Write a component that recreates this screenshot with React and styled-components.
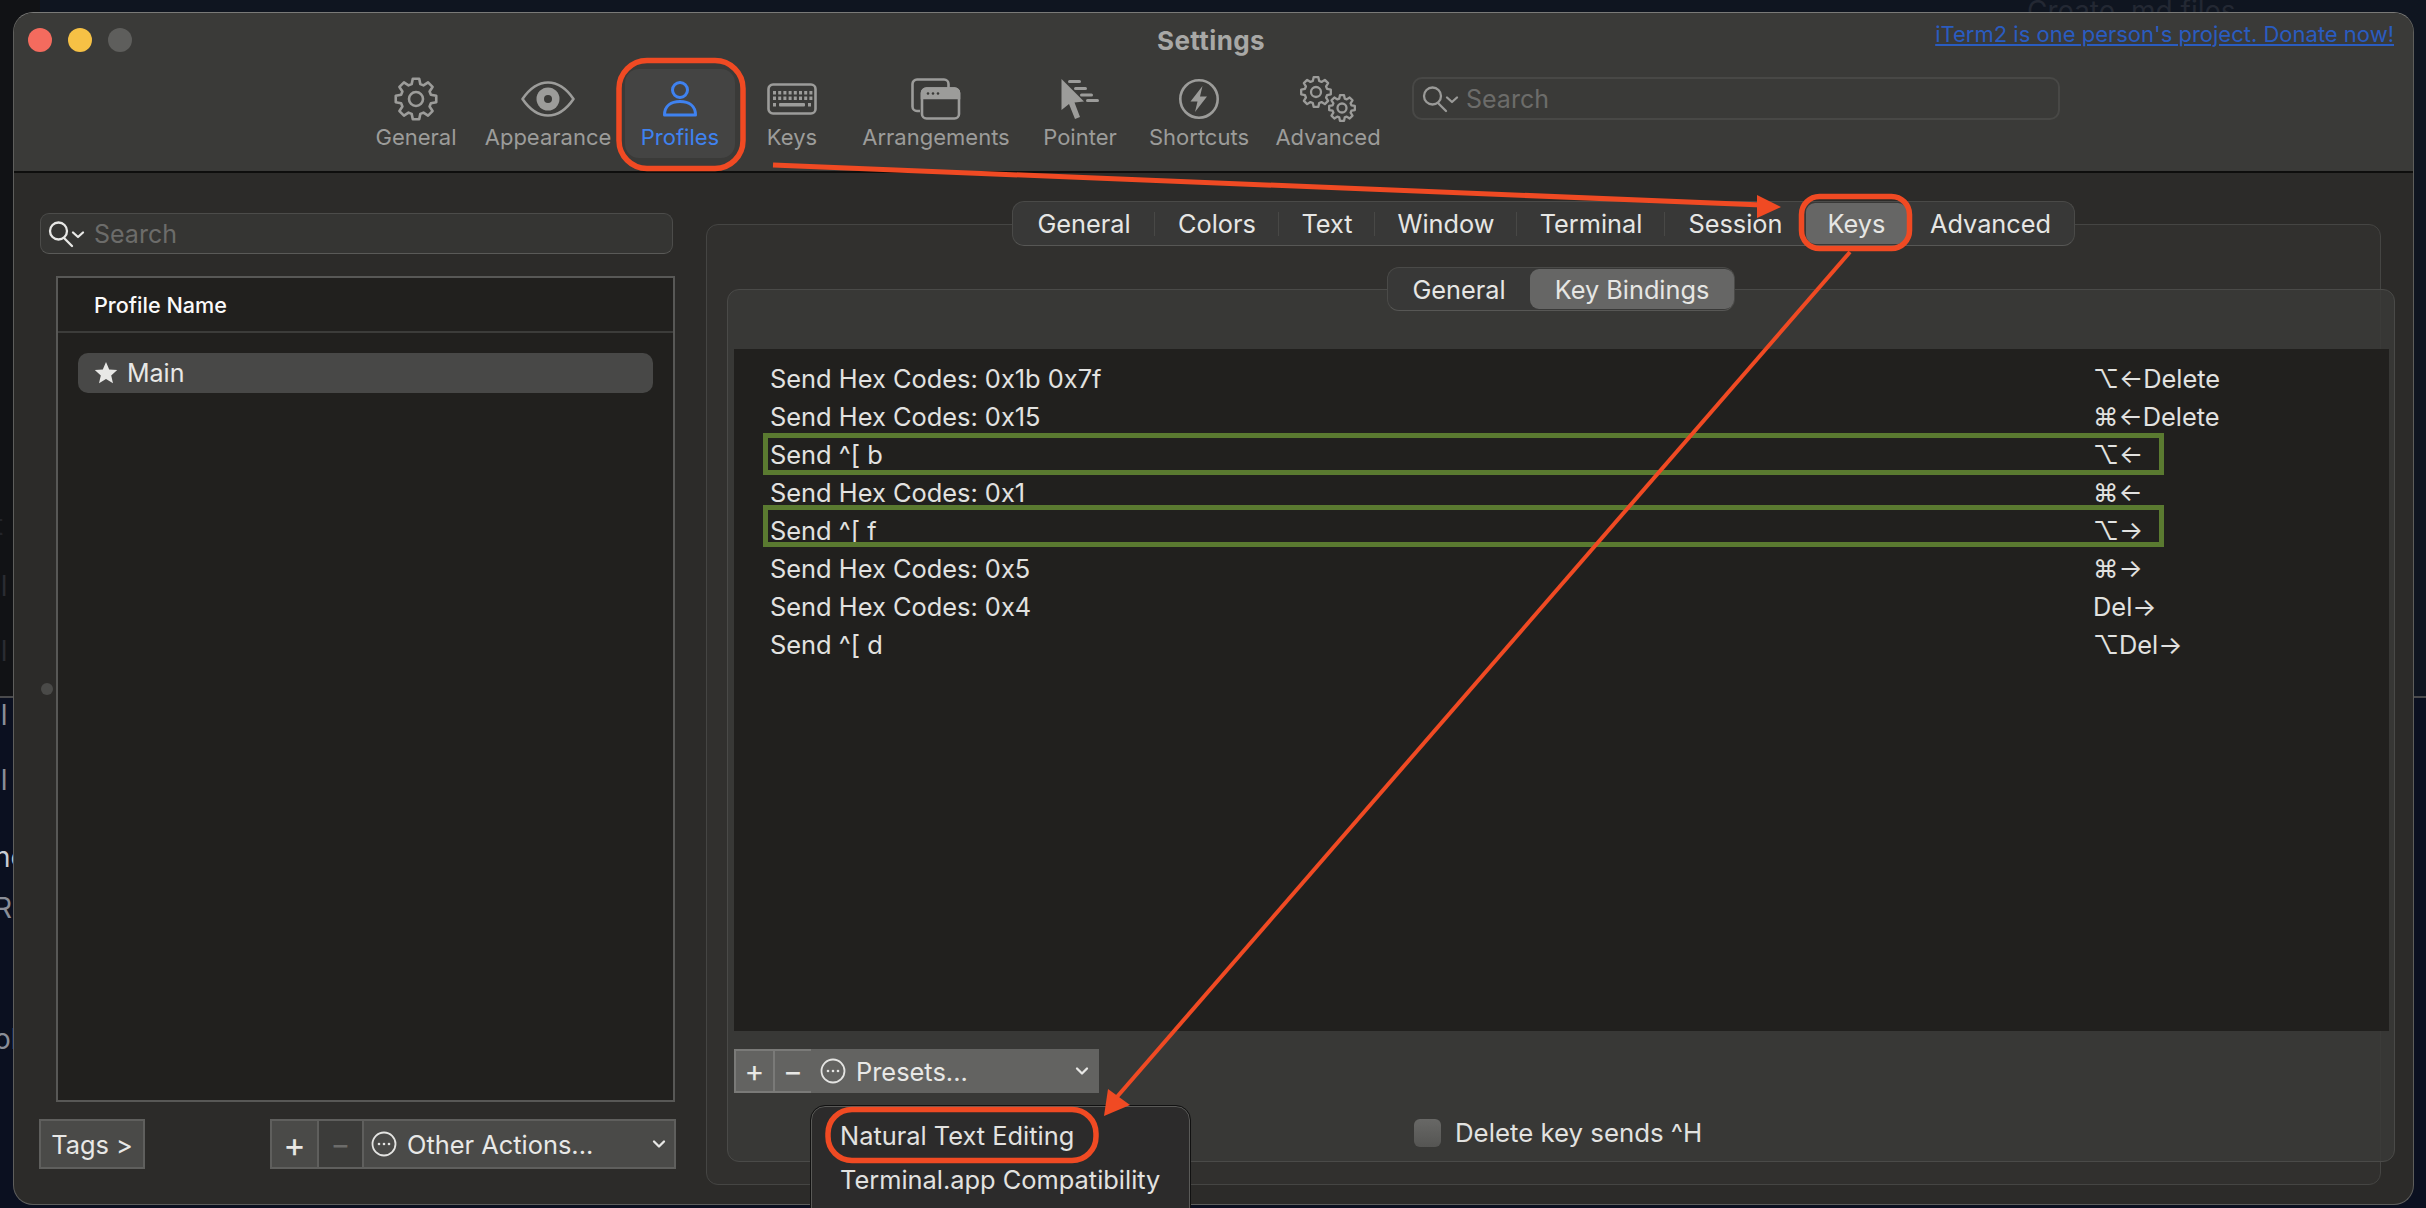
import React from 'react'
import styled, { createGlobalStyle } from 'styled-components'

const FONT = 'Inter, "Noto Sans", "DejaVu Sans", sans-serif'
const RED = '#f04a23'

const GlobalStyle = createGlobalStyle`
  html, body {
    margin: 0;
    background: #0f1520;
  }
  * {
    box-sizing: border-box;
  }
`

const gearPath = (cx, cy, outer, inner, teeth) => {
  const step = (Math.PI * 2) / teeth
  const points = []
  for (let i = 0; i < teeth; i++) {
    const a = i * step - Math.PI / 2
    const at = (r, d) => [
      (cx + r * Math.cos(a + d * step)).toFixed(2),
      (cy + r * Math.sin(a + d * step)).toFixed(2),
    ]
    points.push(at(inner, -0.36), at(outer, -0.2), at(outer, 0.2), at(inner, 0.36))
  }
  return `M${points.map(p => p.join(' ')).join('L')}Z`
}

const GearIcon = () => (
  <svg width="48" height="48" viewBox="0 0 48 48" fill="none" stroke="#9c9c9a" strokeWidth="2.6" strokeLinejoin="round">
    <path d={gearPath(24, 24, 20.5, 15.5, 8)} />
    <circle cx="24" cy="24" r="7" />
  </svg>
)

const EyeIcon = () => (
  <svg width="56" height="40" viewBox="0 0 56 40" fill="none">
    <path d="M2.5 20C10 9 18 3.500 28 3.500S46 9 53.500 20C46 31 38 36.500 28 36.500S10 31 2.500 20Z" stroke="#9c9c9a" strokeWidth="2.6" strokeLinejoin="round" />
    <circle cx="28" cy="20" r="11.500" fill="#9c9c9a" />
    <circle cx="28" cy="20" r="4" fill="#3a3a38" />
  </svg>
)

const PersonIcon = () => (
  <svg width="40" height="40" viewBox="0 0 40 40" fill="none" stroke="#3f82f0" strokeWidth="3">
    <circle cx="20" cy="11" r="7.500" />
    <path d="M4.500 36C4.500 27 11 22.500 20 22.500S35.500 27 35.500 36Z" strokeLinejoin="round" />
  </svg>
)

const KeyboardIcon = () => {
  const dots = []
  for (let x = 0; x < 8; x++) {
    dots.push(<rect key={`a${x}`} x={6 + x * 5.2} y="8" width="3" height="3.500" />)
    dots.push(<rect key={`b${x}`} x={6 + x * 5.2} y="13.500" width="3" height="3.500" />)
  }
  return (
    <svg width="50" height="32" viewBox="0 0 50 32" fill="#9c9c9a">
      <rect x="1.500" y="1.500" width="47" height="29" rx="4.500" fill="none" stroke="#9c9c9a" strokeWidth="2.6" />
      {dots}
      <rect x="6" y="20" width="3" height="3.500" />
      <rect x="12" y="20" width="26" height="3.500" rx="1" />
      <rect x="41" y="20" width="3" height="3.500" />
    </svg>
  )
}

const WindowsIcon = () => (
  <svg width="50" height="42" viewBox="0 0 50 42" fill="none" stroke="#9c9c9a" strokeWidth="2.6">
    <path d="M9 33H6a4.500 4.500 0 0 1-4.500-4.500V6A4.500 4.500 0 0 1 6 1.500h27A4.500 4.500 0 0 1 37.500 6v4" />
    <rect x="11" y="10.500" width="37" height="30" rx="4.500" />
    <path d="M11 15a4.500 4.500 0 0 1 4.500-4.500h28a4.500 4.500 0 0 1 4.500 4.500v5H11Z" fill="#9c9c9a" />
    <circle cx="17" cy="15.500" r="1.300" fill="#3a3a38" stroke="none" />
    <circle cx="22" cy="15.500" r="1.300" fill="#3a3a38" stroke="none" />
    <circle cx="27" cy="15.500" r="1.300" fill="#3a3a38" stroke="none" />
  </svg>
)

const PointerIcon = () => (
  <svg width="40" height="42" viewBox="0 0 40 42" fill="#9c9c9a">
    <path d="M1.500 1L1.500 32L9 26L15 41L20 39L14.500 24.500L24 23.500Z" strokeLinejoin="round" />
    <rect x="8" y="2" width="13" height="3" rx="1.500" />
    <rect x="14" y="9" width="13" height="3" rx="1.500" />
    <rect x="20" y="15.500" width="13" height="3" rx="1.500" />
    <rect x="26" y="21" width="13" height="3" rx="1.500" />
  </svg>
)

const BoltIcon = () => (
  <svg width="42" height="42" viewBox="0 0 42 42" fill="none">
    <circle cx="21" cy="21" r="18.700" stroke="#9c9c9a" strokeWidth="2.6" />
    <path d="M24.500 8L12.500 23.500H19.500L17 34L29 18.500H22Z" fill="#9c9c9a" />
  </svg>
)

const GearsIcon = () => (
  <svg width="58" height="48" viewBox="0 0 58 48" fill="none" stroke="#9c9c9a" strokeWidth="2.3" strokeLinejoin="round">
    <path d={gearPath(17, 17, 15, 11.500, 8)} />
    <circle cx="17" cy="17" r="5" />
    <path d={gearPath(43, 33, 13, 9.800, 8)} />
    <circle cx="43" cy="33" r="4.500" />
  </svg>
)

const SearchGlyph = ({ tone }) => (
  <svg width="38" height="28" viewBox="0 0 38 28" fill="none" stroke={tone} strokeWidth="2.300" strokeLinecap="round" strokeLinejoin="round">
    <circle cx="10.500" cy="11" r="8.500" />
    <path d="M16 18L24 26" />
    <path d="M25 12.500L30 17L35 12.500" />
  </svg>
)

const DotsGlyph = () => (
  <svg width="26" height="26" viewBox="0 0 26 26" fill="#e4e4e2">
    <circle cx="13" cy="13" r="11.500" fill="none" stroke="#e4e4e2" strokeWidth="1.800" />
    <circle cx="8" cy="13" r="1.300" />
    <circle cx="13" cy="13" r="1.300" />
    <circle cx="18" cy="13" r="1.300" />
  </svg>
)

const Chevron = () => (
  <svg width="14" height="10" viewBox="0 0 14 10" fill="none" stroke="#e8e8e6" strokeWidth="2.300" strokeLinecap="round" strokeLinejoin="round">
    <path d="M2 2.500L7 7.500L12 2.500" />
  </svg>
)

const StarGlyph = () => (
  <svg width="24" height="24" viewBox="0 0 24 24" fill="#e8e8e6">
    <path d="M12 1L15.200 8.400L23.200 9.100L17.200 14.400L19 22.300L12 18.100L5 22.300L6.800 14.400L0.800 9.100L8.800 8.400Z" />
  </svg>
)

const Page = styled.div`
  position: relative;
  width: 2426px;
  height: 1208px;
  overflow: hidden;
  padding: 12px 12px 3px 13px;
  font-family: ${FONT};
  background: #0b1020;
`

const TopBackdrop = styled.div`
  position: absolute;
  left: 0;
  top: 0;
  width: 2426px;
  height: 698px;
  background: linear-gradient(90deg, #111215 0 40px, #0f1520 40px);
  border-bottom: 2px solid #4a4a4c;
`

const GhostText = styled.span`
  position: absolute;
  left: ${({ $x }) => $x}px;
  top: ${({ $y }) => $y}px;
  font-size: 28px;
  color: ${({ $tone }) => $tone || '#232833'};
  white-space: nowrap;
`

const Window = styled.div`
  position: relative;
  display: flex;
  flex-direction: column;
  height: 100%;
  border: 1.500px solid #5e5e5c;
  border-top-color: #7a7a78;
  border-radius: 20px;
  background: #2c2b29;
`

const TitleBar = styled.header`
  height: 160px;
  flex-shrink: 0;
  display: flex;
  flex-direction: column;
  background: #3a3a38;
  border-bottom: 2px solid #0e0e0d;
  border-radius: 19px 19px 0 0;
`

const TitleRow = styled.div`
  display: grid;
  grid-template-columns: 1fr auto 1fr;
  align-items: center;
  height: 54px;
  padding: 0 19px 0 14px;
`

const Lights = styled.div`
  display: flex;
  gap: 16px;
`

const Light = styled.span`
  width: 24px;
  height: 24px;
  border-radius: 50%;
  background: ${({ $tone }) => $tone};
`

const Title = styled.h1`
  margin: 0;
  font-size: 26px;
  font-weight: 700;
  letter-spacing: 0.4px;
  color: #a8a8a6;
`

const Donate = styled.a`
  justify-self: end;
  align-self: start;
  margin-top: 8px;
  font-size: 22px;
  color: #2a5cc0;
  text-decoration: underline;
  white-space: nowrap;
`

const Toolbar = styled.nav`
  display: flex;
  align-items: flex-start;
  padding-left: 336px;
`

const ToolItem = styled.div`
  width: ${({ $width }) => $width}px;
  display: flex;
  justify-content: center;
`

const ToolInner = styled.div`
  width: 110px;
  height: 89px;
  margin-top: 2px;
  display: flex;
  flex-direction: column;
  align-items: center;
  flex-shrink: 0;
  border-radius: 14px;
  background: ${({ $active }) => ($active ? '#444443' : 'transparent')};
`

const ToolIcon = styled.div`
  height: 50px;
  margin-top: 5px;
  display: flex;
  align-items: center;
  justify-content: center;
`

const ToolLabel = styled.span`
  font-size: 22px;
  white-space: nowrap;
  color: ${({ $active }) => ($active ? '#3f82f0' : '#9c9c9a')};
`

const ToolbarSearch = styled.div`
  width: 648px;
  height: 43px;
  margin: 10px 0 0 28px;
  display: flex;
  align-items: center;
  gap: 6px;
  padding-left: 8px;
  border: 2px solid #484846;
  border-radius: 10px;
  font-size: 25px;
  color: #6c6c6a;
`

const Body = styled.main`
  flex: 1;
  min-height: 0;
  display: flex;
`

const LeftPane = styled.section`
  width: 692px;
  flex-shrink: 0;
  padding: 40px 0 0 26px;
  position: relative;
`

const SideDot = styled.span`
  position: absolute;
  left: 27px;
  top: 510px;
  width: 12px;
  height: 12px;
  border-radius: 50%;
  background: #4a4a48;
`

const SideSearch = styled.div`
  width: 633px;
  height: 41px;
  display: flex;
  align-items: center;
  gap: 8px;
  padding-left: 7px;
  background: #353533;
  border: 1.500px solid #4c4c4a;
  border-bottom-color: #5a5a58;
  border-radius: 9px;
  font-size: 25px;
  color: #6c6c6a;
`

const ProfileTable = styled.div`
  width: 619px;
  height: 826px;
  margin: 22px 0 0 16px;
  background: #21201e;
  border: 2px solid #585856;
`

const TableHead = styled.div`
  height: 55px;
  display: flex;
  align-items: center;
  padding-left: 36px;
  border-bottom: 2px solid #3c3c3a;
  font-size: 21.600px;
  font-weight: 500;
  color: #fafafa;
`

const ProfileRow = styled.div`
  height: 40px;
  margin: 20px 20px 0 20px;
  display: flex;
  align-items: center;
  gap: 9px;
  padding-left: 16px;
  border-radius: 10px;
  background: #484847;
  font-size: 25px;
  color: #e8e8e6;
`

const SideActions = styled.div`
  width: 637px;
  height: 50px;
  margin-top: 17px;
  margin-left: -1px;
  display: flex;
  justify-content: space-between;
`

const BarGroup = styled.div`
  display: flex;
`

const BarButton = styled.div`
  width: ${({ $width }) => $width}px;
  height: ${({ $height }) => $height || 50}px;
  display: flex;
  align-items: center;
  justify-content: ${({ $spread }) => ($spread ? 'flex-start' : 'center')};
  gap: 10px;
  padding-left: ${({ $spread }) => ($spread ? '7px' : 0)};
  margin-left: ${({ $joined }) => ($joined ? '-2px' : 0)};
  position: relative;
  background: ${({ $tone }) => $tone || '#4a4a48'};
  border: 2px solid ${({ $line }) => $line || '#5f5f5d'};
  font-size: ${({ $size }) => $size || 25.4}px;
  color: ${({ $muted }) => ($muted ? '#6c6c6a' : '#e8e8e6')};
`

const ChevronSlot = styled.span`
  margin-left: auto;
  margin-right: 8px;
  display: flex;
`

const RightPane = styled.section`
  flex: 1;
  min-width: 0;
  display: flex;
  flex-direction: column;
  padding: 28px 32px 19px 0;
`

const OuterTabs = styled.div`
  position: relative;
  z-index: 1;
  align-self: center;
  display: flex;
  height: 45px;
  margin-bottom: -22px;
  background: #383837;
  border: 1.500px solid #4a4a48;
  border-bottom-color: #575755;
  border-radius: 12px;
`

const InnerTabs = styled(OuterTabs)`
  height: 44px;
  margin-left: 15px;
  margin-bottom: -22px;
`

const Tab = styled.div`
  position: relative;
  width: ${({ $width }) => $width}px;
  display: flex;
  align-items: center;
  justify-content: center;
  font-size: 25.300px;
  color: #e6e6e4;
  border-radius: 9px;
  background: ${({ $active }) => ($active ? '#666665' : 'transparent')};
  margin: ${({ $active }) => ($active ? '1px 0' : 0)};
  &::after {
    content: '';
    display: ${({ $sep }) => ($sep ? 'block' : 'none')};
    position: absolute;
    right: 0;
    top: 10px;
    height: 24px;
    width: 1.500px;
    background: #484846;
  }
`

const TabPanel = styled.div`
  flex: 1;
  min-height: 0;
  display: flex;
  flex-direction: column;
  padding: 42px 0 22px 20px;
  border: 1.500px solid #454543;
  border-radius: 12px;
  background: #31302e;
`

const BindingsPanel = styled.div`
  flex: 1;
  min-height: 0;
  margin-right: -15px;
  display: flex;
  flex-direction: column;
  padding: 59px 5px 0 6px;
  border: 1.500px solid #4a4a48;
  border-radius: 12px;
  background: rgba(58, 57, 55, 0.85);
`

const BindingsTable = styled.div`
  height: 682px;
  padding: 10px 0 0 36px;
  background: #21201e;
`

const BindingRow = styled.div`
  height: 38px;
  display: grid;
  grid-template-columns: 1323px auto;
  align-items: center;
  font-size: 25.400px;
  color: #e2e2e0;
`

const BindingKeys = styled.span`
  white-space: nowrap;
`

const BindingAction = styled.span`
  white-space: nowrap;
`

const PanelActions = styled.div`
  margin-top: 18px;
  display: flex;
`

const Menu = styled.div`
  position: absolute;
  left: -2px;
  top: 55px;
  width: 379px;
  height: 130px;
  padding: 6px 0 0 28px;
  border: 1.500px solid #5a5a58;
  outline: 1.500px solid #111;
  border-radius: 14px 14px 0 0;
  background: #2c2b2b;
  z-index: 2;
`

const MenuItem = styled.div`
  height: 44px;
  display: flex;
  align-items: center;
  font-size: 25.400px;
  color: #e2e2e0;
  white-space: nowrap;
`

const CheckRow = styled.label`
  margin-top: 24px;
  margin-left: 680px;
  display: flex;
  align-items: center;
  gap: 14px;
  font-size: 25.800px;
  color: #e2e2e0;
`

const CheckBox = styled.span`
  width: 27px;
  height: 28px;
  border-radius: 6px;
  background: linear-gradient(#686866, #555553);
`

const Annotations = styled.svg`
  position: absolute;
  left: 0;
  top: 0;
  z-index: 3;
  pointer-events: none;
`

const TOOLS = [
  { label: 'General', width: 132, icon: <GearIcon /> },
  { label: 'Appearance', width: 132, icon: <EyeIcon /> },
  { label: 'Profiles', width: 132, icon: <PersonIcon />, active: true },
  { label: 'Keys', width: 92, icon: <KeyboardIcon /> },
  { label: 'Arrangements', width: 196, icon: <WindowsIcon /> },
  { label: 'Pointer', width: 92, icon: <PointerIcon /> },
  { label: 'Shortcuts', width: 146, icon: <BoltIcon /> },
  { label: 'Advanced', width: 112, icon: <GearsIcon /> },
]

const PROFILE_TABS = [
  { label: 'General', width: 142, sep: true },
  { label: 'Colors', width: 124, sep: true },
  { label: 'Text', width: 96, sep: true },
  { label: 'Window', width: 142, sep: true },
  { label: 'Terminal', width: 148, sep: true },
  { label: 'Session', width: 141 },
  { label: 'Keys', width: 101, active: true },
  { label: 'Advanced', width: 167 },
]

const BINDINGS = [
  ['Send Hex Codes: 0x1b 0x7f', '⌥←Delete'],
  ['Send Hex Codes: 0x15', '⌘←Delete'],
  ['Send ^[ b', '⌥←'],
  ['Send Hex Codes: 0x1', '⌘←'],
  ['Send ^[ f', '⌥→'],
  ['Send Hex Codes: 0x5', '⌘→'],
  ['Send Hex Codes: 0x4', 'Del→'],
  ['Send ^[ d', '⌥Del→'],
]

// bits of the window behind, cut off by the left edge of this one
const BEHIND_LEFT = [
  { text: 't', y: 508, tone: '#22242a' },
  { text: 'll', y: 569, tone: '#2a2c32' },
  { text: 'll', y: 634, tone: '#2a2c32' },
  { text: 'll', y: 698, tone: '#8a8e98' },
  { text: 'll', y: 763, tone: '#8a8e98' },
  { text: 'ne', y: 840, tone: '#c8ccd4' },
  { text: 'R', y: 891, tone: '#8a8e98' },
  { text: 'ol', y: 1022, tone: '#8a8e98' },
]

const App = () => (
  <Page>
    <GlobalStyle />
    <TopBackdrop />
    <GhostText $x={2027} $y={-6}>Create .md files</GhostText>
    {BEHIND_LEFT.map(item => (
      <GhostText key={item.y} $x={-6} $y={item.y} $tone={item.tone}>{item.text}</GhostText>
    ))}
    <Window>
      <TitleBar>
        <TitleRow>
          <Lights>
            <Light $tone="#f46b5e" />
            <Light $tone="#f6c145" />
            <Light $tone="#5e5e5c" />
          </Lights>
          <Title>Settings</Title>
          <Donate>iTerm2 is one person's project. Donate now!</Donate>
        </TitleRow>
        <Toolbar>
          {TOOLS.map(tool => (
            <ToolItem key={tool.label} $width={tool.width}>
              <ToolInner $active={tool.active}>
                <ToolIcon>{tool.icon}</ToolIcon>
                <ToolLabel $active={tool.active}>{tool.label}</ToolLabel>
              </ToolInner>
            </ToolItem>
          ))}
          <ToolbarSearch>
            <SearchGlyph tone="#9a9a98" />
            Search
          </ToolbarSearch>
        </Toolbar>
      </TitleBar>
      <Body>
        <LeftPane>
          <SideDot />
          <SideSearch>
            <SearchGlyph tone="#e8e8e6" />
            Search
          </SideSearch>
          <ProfileTable>
            <TableHead>Profile Name</TableHead>
            <ProfileRow>
              <StarGlyph />
              Main
            </ProfileRow>
          </ProfileTable>
          <SideActions>
            <BarButton $width={106}>Tags &gt;</BarButton>
            <BarGroup>
              <BarButton $width={49} $size={34}>+</BarButton>
              <BarButton $width={47} $joined $tone="#3c3c3a" $muted $size={30}>−</BarButton>
              <BarButton $width={314} $joined $spread>
                <DotsGlyph />
                Other Actions...
                <ChevronSlot><Chevron /></ChevronSlot>
              </BarButton>
            </BarGroup>
          </SideActions>
        </LeftPane>
        <RightPane>
          <OuterTabs>
            {PROFILE_TABS.map(tab => (
              <Tab key={tab.label} $width={tab.width} $sep={tab.sep} $active={tab.active}>
                {tab.label}
              </Tab>
            ))}
          </OuterTabs>
          <TabPanel>
            <InnerTabs>
              <Tab $width={142}>General</Tab>
              <Tab $width={204} $active>Key Bindings</Tab>
            </InnerTabs>
            <BindingsPanel>
              <BindingsTable>
                {BINDINGS.map(([action, keys]) => (
                  <BindingRow key={action + keys}>
                    <BindingAction>{action}</BindingAction>
                    <BindingKeys>{keys}</BindingKeys>
                  </BindingRow>
                ))}
              </BindingsTable>
              <PanelActions>
                <BarButton $width={41} $height={44} $tone="#636361" $line="#7a7a78" $size={30}>+</BarButton>
                <BarButton $width={40} $height={44} $joined $tone="#636361" $line="#7a7a78" $size={30}>−</BarButton>
                <BarButton $width={288} $height={44} $joined $spread $tone="#636361" $line="#636361">
                  <DotsGlyph />
                  Presets...
                  <ChevronSlot><Chevron /></ChevronSlot>
                  <Menu>
                    <MenuItem>Natural Text Editing</MenuItem>
                    <MenuItem>Terminal.app Compatibility</MenuItem>
                  </Menu>
                </BarButton>
              </PanelActions>
              <CheckRow>
                <CheckBox />
                Delete key sends ^H
              </CheckRow>
            </BindingsPanel>
          </TabPanel>
        </RightPane>
      </Body>
    </Window>
    <Annotations width="2426" height="1208" viewBox="0 0 2426 1208" fill="none">
      <rect x="765.500" y="435.500" width="1396" height="37" stroke="#5a7a30" strokeWidth="5" />
      <rect x="765.500" y="507.500" width="1396" height="37" stroke="#5a7a30" strokeWidth="5" />
      <rect x="619" y="60.500" width="124" height="108" rx="28" stroke={RED} strokeWidth="5.500" />
      <rect x="1801.500" y="196.500" width="108" height="52" rx="18" stroke={RED} strokeWidth="5.500" />
      <rect x="828" y="1109.500" width="268" height="51" rx="24" stroke={RED} strokeWidth="5.500" />
      <path d="M773 165L1762 205" stroke={RED} strokeWidth="5" />
      <path d="M1781 207L1757 195L1757 218Z" fill={RED} />
      <path d="M1850 252L1116 1098" stroke={RED} strokeWidth="4" />
      <path d="M1104 1116L1108 1089L1130 1105Z" fill={RED} />
    </Annotations>
  </Page>
)

export default App
